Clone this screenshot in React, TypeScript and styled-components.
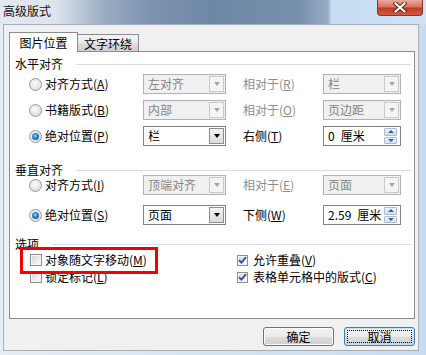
import React from "react";
import styled, { createGlobalStyle } from "styled-components";

const GlobalStyle = createGlobalStyle`
  html, body { margin: 0; padding: 0; background: #fff; }
  body {
    font-family: "Noto Sans CJK SC", "Noto Sans", sans-serif;
    font-size: 12px;
    color: #000;
  }
  #root { width: 426px; height: 355px; overflow: hidden; }
`;

const Window = styled.div`
  width: 426px;
  height: 355px;
  display: flex;
  flex-direction: column;
  background: linear-gradient(to right, #e6edf4 0%, #d6e4f1 45%, #c8dcf1 100%);
`;

const TitleBar = styled.div`
  height: 24px;
  flex: none;
  display: flex;
  align-items: flex-start;
  justify-content: space-between;
  background: linear-gradient(
    to right,
    #e3e9ef 0%,
    #dde4ec 13%,
    #98abc1 25%,
    #7d94af 35%,
    #6d87a6 50%,
    #7690ac 70%,
    #98adc4 77%,
    #c6dcf2 77.8%,
    #cfe3f5 100%
  );
`;

const Title = styled.span`
  padding: 5px 0 0 3px;
  line-height: 12px;
  font-size: 12px;
  color: #111;
`;

const CloseButton = styled.div`
  width: 46px;
  height: 16px;
  margin-right: 3px;
  box-sizing: border-box;
  border: 1px solid #8a3526;
  border-top: none;
  border-radius: 0 0 4px 4px;
  background: linear-gradient(#e8ab9d 0%, #d9725f 45%, #c23b23 55%, #d35b43 100%);
  display: flex;
  align-items: center;
  justify-content: center;
`;

const Body = styled.div`
  flex: 1;
  margin: 0 7px 4px 3px;
  border: 1px solid #a3afbb;
  background: #f0f0f0;
  padding: 7px 3px 0 5px;
  display: flex;
  flex-direction: column;
`;

const TabStrip = styled.div`
  height: 20px;
  display: flex;
  align-items: flex-end;
  position: relative;
  z-index: 1;
  margin-bottom: -1px;
`;

const Tab = styled.div<{ $active?: boolean }>`
  box-sizing: border-box;
  height: ${(p) => (p.$active ? "20px" : "17px")};
  width: ${(p) => (p.$active ? "69px" : "62px")};
  margin-bottom: ${(p) => (p.$active ? "0" : "1px")};
  margin-left: ${(p) => (p.$active ? "0" : "-1px")};
  border: 1px solid #898c95;
  border-bottom: none;
  background: ${(p) =>
    p.$active ? "#fff" : "linear-gradient(#f3f3f3 0%, #ebebeb 50%, #dddddd 51%, #cfcfcf 100%)"};
  display: flex;
  justify-content: center;
  align-items: center;
  padding-top: ${(p) => (p.$active ? "0" : "1px")};
  line-height: 12px;
`;

const Panel = styled.div`
  height: 268px;
  box-sizing: border-box;
  border: 1px solid #898c95;
  background: #fff;
  padding: 6px 3px 0 0;
  display: flex;
  flex-direction: column;
`;

const Group = styled.div<{ $top?: number }>`
  margin-top: ${(p) => p.$top ?? 0}px;
  position: relative;
`;

const GroupHeader = styled.div`
  height: 12px;
  line-height: 12px;
  padding-left: 5px;
  display: flex;
  align-items: center;
  gap: 13px;
  &::after {
    content: "";
    flex: 1;
    height: 1px;
    background: #d5dfe5;
  }
`;

const Rows = styled.div<{ $top: number; $gap: number }>`
  margin-top: ${(p) => p.$top}px;
  display: flex;
  flex-direction: column;
  gap: ${(p) => p.$gap}px;
`;

const Row = styled.div`
  height: 20px;
  padding-left: 19px;
  display: grid;
  grid-template-columns: 114px 100px 80px 78px;
  align-items: center;
`;

const CheckRow = styled.div`
  height: 16px;
  padding-left: 20px;
  display: grid;
  grid-template-columns: 207px 1fr;
  align-items: center;
`;

const Choice = styled.div<{ $gap?: number }>`
  display: flex;
  align-items: center;
  gap: ${(p) => p.$gap ?? 3}px;
  line-height: 12px;
  white-space: nowrap;
`;

const Label = styled.span<{ $disabled?: boolean }>`
  line-height: 12px;
  white-space: nowrap;
  color: ${(p) => (p.$disabled ? "#8d8d8d" : "#000")};
`;

const Radio = styled.span<{ $checked?: boolean }>`
  width: 13px;
  height: 13px;
  flex: none;
  box-sizing: border-box;
  border-radius: 50%;
  border: 1px solid #9a9a9a;
  background: radial-gradient(circle at 45% 40%, #fbfbfb 0%, #e6e6e6 55%, #cfcfcf 100%);
  display: flex;
  align-items: center;
  justify-content: center;
  &::after {
    content: "";
    display: ${(p) => (p.$checked ? "block" : "none")};
    width: 7px;
    height: 7px;
    border-radius: 50%;
    background: radial-gradient(circle at 45% 40%, #9fdcff 0%, #2d86cf 40%, #0c3d7a 100%);
  }
`;

const Box = styled.span<{ $size: number }>`
  width: ${(p) => p.$size}px;
  height: ${(p) => p.$size}px;
  flex: none;
  box-sizing: border-box;
  border: 1px solid #8e8f8f;
  background: linear-gradient(135deg, #cfd2d5 0%, #eceeef 60%, #fafafa 100%);
  box-shadow: inset 0 0 0 1px #f6f6f6;
  display: flex;
  align-items: center;
  justify-content: center;
`;

const Combo = styled.div<{ $disabled?: boolean; $w: number }>`
  width: ${(p) => p.$w}px;
  height: 20px;
  box-sizing: border-box;
  border: 1px solid ${(p) => (p.$disabled ? "#afb3b7" : "#7f8388")};
  background: ${(p) => (p.$disabled ? "#f0f0f0" : "#fff")};
  padding: 1px;
  display: flex;
`;

const ComboText = styled.span<{ $disabled?: boolean }>`
  flex: 1;
  padding-left: 3px;
  line-height: 16px;
  white-space: pre;
  color: ${(p) => (p.$disabled ? "#858585" : "#000")};
`;

const DropButton = styled.span<{ $disabled?: boolean }>`
  width: 15px;
  box-sizing: border-box;
  border: 1px solid ${(p) => (p.$disabled ? "#c9c9c9" : "#8d8d8d")};
  background: ${(p) =>
    p.$disabled ? "#f4f4f4" : "linear-gradient(#f2f2f2, #dcdcdc)"};
  display: flex;
  align-items: center;
  justify-content: center;
  &::after {
    content: "";
    border-left: 3.5px solid transparent;
    border-right: 3.5px solid transparent;
    border-top: 4px solid ${(p) => (p.$disabled ? "#a6a6a6" : "#000")};
  }
`;

const SpinButtons = styled.span`
  width: 13px;
  margin-right: 2px;
  display: flex;
  flex-direction: column;
  gap: 1px;
`;

const SpinHalf = styled.span<{ $up?: boolean }>`
  flex: 1;
  border: 1px solid #a9bfd6;
  border-radius: 1px;
  background: linear-gradient(#eef5fc, #cfe0f2);
  display: flex;
  align-items: center;
  justify-content: center;
  &::after {
    content: "";
    border-left: 3px solid transparent;
    border-right: 3px solid transparent;
    ${(p) => (p.$up ? "border-bottom" : "border-top")}: 3px solid #3d5f8c;
  }
`;

const RedMark = styled.div`
  position: absolute;
  left: 10px;
  top: 9px;
  width: 138px;
  height: 27px;
  box-sizing: border-box;
  border: 3px solid #f20000;
  pointer-events: none;
`;

const ButtonBar = styled.div`
  margin-top: 8px;
  display: flex;
  justify-content: flex-end;
  gap: 10px;
`;

const Button = styled.button<{ $default?: boolean }>`
  width: 71px;
  height: 19px;
  padding: 0;
  font: inherit;
  font-size: 12px;
  line-height: 12px;
  color: #000;
  position: relative;
  border: 1px solid ${(p) => (p.$default ? "#3c7fb1" : "#707070")};
  border-radius: 3px;
  background: linear-gradient(#f2f2f2 0%, #ebebeb 50%, #dddddd 51%, #cfcfcf 100%);
  box-shadow: inset 0 0 0 1px ${(p) => (p.$default ? "#b9e3f9" : "#fbfbfb")};
  &::after {
    content: "";
    display: ${(p) => (p.$default ? "block" : "none")};
    position: absolute;
    inset: 2px;
    border: 1px dotted #000;
  }
`;

const Key = ({ k }: { k: string }) => (
  <>
    (<u>{k}</u>)
  </>
);

const RadioChoice = ({ text, k, checked }: { text: string; k: string; checked?: boolean }) => (
  <Choice>
    <Radio $checked={checked} />
    <Label>
      {text}
      <Key k={k} />
    </Label>
  </Choice>
);

const CheckChoice = ({ text, k, checked, size }: { text: string; k: string; checked?: boolean; size: number }) => (
  <Choice $gap={size < 12 ? 5 : 3}>
    <Box $size={size}>
      {checked && (
        <svg width="9" height="8" viewBox="0 0 9 8">
          <path d="M1 4.2 L3.4 6.6 L8 1.2" fill="none" stroke="#2f4f94" strokeWidth="1.8" />
        </svg>
      )}
    </Box>
    <Label>
      {text}
      <Key k={k} />
    </Label>
  </Choice>
);

const Select = ({ value, w, disabled }: { value: string; w: number; disabled?: boolean }) => (
  <Combo $w={w} $disabled={disabled}>
    <ComboText $disabled={disabled}>{value}</ComboText>
    <DropButton $disabled={disabled} />
  </Combo>
);

const Spin = ({ value }: { value: string }) => (
  <Combo $w={78}>
    <ComboText>{value}</ComboText>
    <SpinButtons>
      <SpinHalf $up />
      <SpinHalf />
    </SpinButtons>
  </Combo>
);

const SideLabel = ({ text, k, disabled }: { text: string; k: string; disabled?: boolean }) => (
  <Label $disabled={disabled}>
    {text}
    <Key k={k} />
  </Label>
);

export default function App() {
  return (
    <>
      <GlobalStyle />
      <Window>
        <TitleBar>
          <Title>高级版式</Title>
          <CloseButton>
            <svg width="14" height="11" viewBox="0 0 14 11">
              <path d="M2.5 1.5 L11.5 9.5 M11.5 1.5 L2.5 9.5" stroke="#5b2b24" strokeWidth="4" strokeLinecap="square" />
              <path d="M2.5 1.5 L11.5 9.5 M11.5 1.5 L2.5 9.5" stroke="#fff" strokeWidth="2" strokeLinecap="square" />
            </svg>
          </CloseButton>
        </TitleBar>
        <Body>
          <TabStrip>
            <Tab $active>图片位置</Tab>
            <Tab>文字环绕</Tab>
          </TabStrip>
          <Panel>
            <Group>
              <GroupHeader>水平对齐</GroupHeader>
              <Rows $top={4} $gap={6}>
                <Row>
                  <RadioChoice text="对齐方式" k="A" />
                  <Select value="左对齐" w={83} disabled />
                  <SideLabel text="相对于" k="R" disabled />
                  <Select value="栏" w={78} disabled />
                </Row>
                <Row>
                  <RadioChoice text="书籍版式" k="B" />
                  <Select value="内部" w={83} disabled />
                  <SideLabel text="相对于" k="O" disabled />
                  <Select value="页边距" w={78} disabled />
                </Row>
                <Row>
                  <RadioChoice text="绝对位置" k="P" checked />
                  <Select value="栏" w={83} />
                  <SideLabel text="右侧" k="T" />
                  <Spin value={"0\u2002厘米"} />
                </Row>
              </Rows>
            </Group>
            <Group $top={18}>
              <GroupHeader>垂直对齐</GroupHeader>
              <Rows $top={-1} $gap={10}>
                <Row>
                  <RadioChoice text="对齐方式" k="I" />
                  <Select value="顶端对齐" w={83} disabled />
                  <SideLabel text="相对于" k="E" disabled />
                  <Select value="页面" w={78} disabled />
                </Row>
                <Row>
                  <RadioChoice text="绝对位置" k="S" checked />
                  <Select value="页面" w={83} />
                  <SideLabel text="下侧" k="W" />
                  <Spin value={"2.59\u2002厘米"} />
                </Row>
              </Rows>
            </Group>
            <Group $top={13}>
              <GroupHeader>选项</GroupHeader>
              <Rows $top={2} $gap={1}>
                <CheckRow>
                  <CheckChoice text="对象随文字移动" k="M" size={12} />
                  <CheckChoice text="允许重叠" k="V" size={11} checked />
                </CheckRow>
                <CheckRow>
                  <CheckChoice text="锁定标记" k="L" size={12} />
                  <CheckChoice text="表格单元格中的版式" k="C" size={11} checked />
                </CheckRow>
              </Rows>
              <RedMark />
            </Group>
          </Panel>
          <ButtonBar>
            <Button>确定</Button>
            <Button $default>取消</Button>
          </ButtonBar>
        </Body>
      </Window>
    </>
  );
}
